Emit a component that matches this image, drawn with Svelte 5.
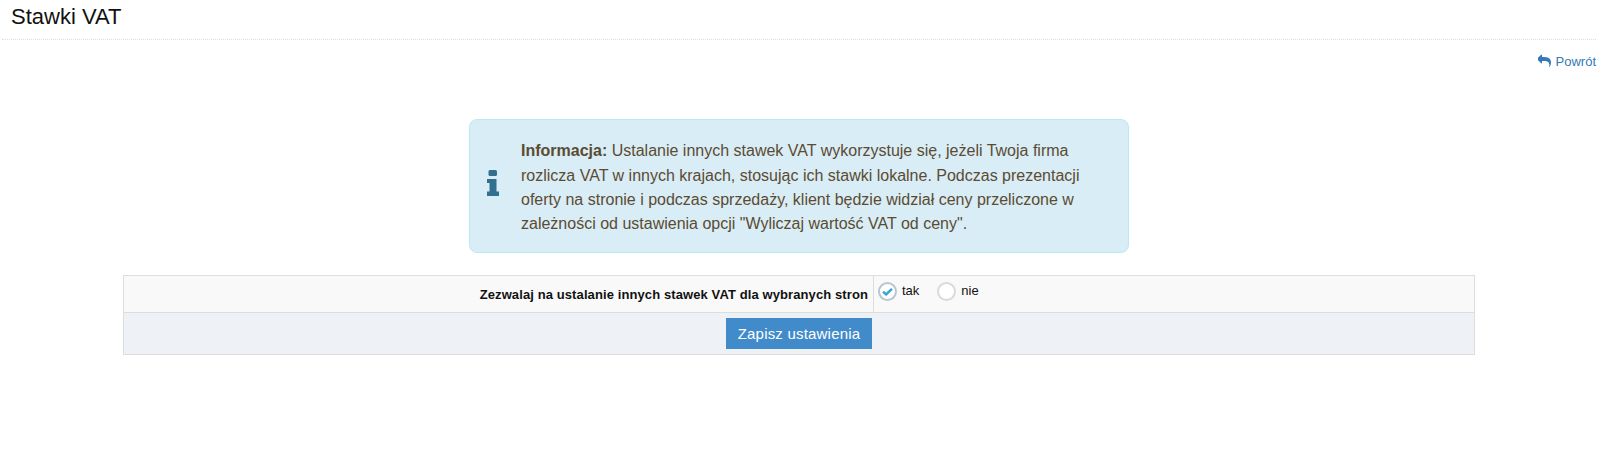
<script>
  let allow = $state('tak');
</script>

<div class="page">
  <h1 class="title">Stawki VAT</h1>

  <div class="back-row">
    <a class="back" href="#powrot">
      <svg viewBox="0 0 1792 1792" width="14" height="14" aria-hidden="true">
        <path d="M1664 1120q0 166-127 451-3 7-10.500 24t-13.500 30-13 22q-12 17-28 17-15 0-23.500-10t-8.500-25q0-9 2.500-26.500t2.500-23.500q5-68 5-123 0-101-17.500-181t-48.500-138.500-80-101-105.500-69.500-133-42.500-154-21.500-175.500-6h-224v256q0 26-19 45t-45 19-45-19l-512-512q-19-19-19-45t19-45l512-512q19-19 45-19t45 19 19 45v256h224q713 0 875 403 53 134 53 333z" />
      </svg>
      Powrót
    </a>
  </div>

  <div class="info">
    <svg class="info-icon" viewBox="0 0 12 26" width="12" height="26" aria-hidden="true">
      <rect x="1.500" y="0" width="8.500" height="6" rx="1.500" />
      <path d="M0 9h9.500v12.500H12V26H0v-4.500h2.500V13H0z" />
    </svg>
    <p>
      <strong>Informacja:</strong> Ustalanie innych stawek VAT wykorzystuje się, jeżeli Twoja firma
      rozlicza VAT w innych krajach, stosując ich stawki lokalne. Podczas prezentacji
      oferty na stronie i podczas sprzedaży, klient będzie widział ceny przeliczone w
      zależności od ustawienia opcji "Wyliczaj wartość VAT od ceny".
    </p>
  </div>

  <form class="settings" onsubmit={(e) => e.preventDefault()}>
    <div class="row">
      <div class="label">Zezwalaj na ustalanie innych stawek VAT dla wybranych stron</div>
      <div class="options">
        {#each ['tak', 'nie'] as option}
          <label class="radio">
            <input type="radio" name="allow" value={option} bind:group={allow} />
            <span class="mark" class:on={allow === option}>
              {#if allow === option}
                <svg viewBox="0 0 12 9" width="11" height="8" aria-hidden="true">
                  <path d="M1 4.200 4.500 7.200 11 1" fill="none" stroke="#3aa3d3" stroke-width="2.800" />
                </svg>
              {/if}
            </span>
            {option}
          </label>
        {/each}
      </div>
    </div>
    <div class="actions">
      <button type="submit">Zapisz ustawienia</button>
    </div>
  </form>
</div>

<style>
  :global(body) {
    margin: 0;
    background: #fff;
    font-family: "Liberation Sans", Arial, sans-serif;
  }

  .page {
    width: 1598px;
    height: 473px;
    overflow: hidden;
  }

  .title {
    margin: 0 2px;
    padding: 3px 0 0 9px;
    height: 36px;
    font-size: 22px;
    line-height: 27px;
    font-weight: 400;
    color: #111;
    border-bottom: 1px dotted #ddd;
  }

  .back-row {
    display: flex;
    justify-content: flex-end;
    margin-top: 13px;
    padding-right: 2px;
    height: 66px;
  }

  .back {
    display: flex;
    align-items: center;
    gap: 4px;
    height: 16px;
    font-size: 13px;
    color: #337ab7;
    text-decoration: none;
  }

  .back svg {
    fill: #337ab7;
  }

  .info {
    box-sizing: border-box;
    display: flex;
    align-items: center;
    width: 660px;
    height: 134px;
    margin: 0 auto;
    padding: 0 40px 0 17px;
    background: #d9edf7;
    border: 1px solid #bce8f1;
    border-radius: 8px;
    color: #5b4b31;
  }

  .info-icon {
    flex: none;
    fill: #31708f;
    margin: 0 22px 7px 0;
  }

  .info p {
    margin: 0;
    padding-top: 4px;
    font-size: 16px;
    line-height: 24.400px;
  }

  .settings {
    box-sizing: border-box;
    width: 1352px;
    margin: 22px auto 0;
    border: 1px solid #ddd;
    font-size: 13px;
  }

  .row {
    display: grid;
    grid-template-columns: 750px 1fr;
    height: 36px;
    background: #f9f9f9;
    border-bottom: 1px solid #ddd;
  }

  .label {
    display: flex;
    align-items: center;
    justify-content: flex-end;
    padding-right: 5px;
    font-weight: 700;
    color: #111;
    border-right: 1px solid #ddd;
    letter-spacing: 0.1px;
  }

  .options {
    display: flex;
    align-items: flex-start;
    gap: 18px;
    padding: 6px 0 0 4px;
  }

  .radio {
    display: flex;
    align-items: flex-start;
    gap: 5px;
    color: #111;
    line-height: 17px;
  }

  .radio input {
    position: absolute;
    opacity: 0;
    width: 0;
    height: 0;
  }

  .mark {
    box-sizing: border-box;
    display: flex;
    align-items: center;
    justify-content: center;
    width: 19px;
    height: 19px;
    border: 2px solid #dadada;
    border-radius: 50%;
    background: #fff;
  }

  .mark.on {
    border-color: #b9c6cf;
  }

  .actions {
    display: flex;
    justify-content: center;
    padding: 5px 0;
    background: #eef1f5;
  }

  button {
    box-sizing: border-box;
    width: 146px;
    height: 31px;
    padding: 0;
    border: 0;
    background: #428bca;
    color: #fff;
    font: 15px "Liberation Sans", Arial, sans-serif;
    letter-spacing: 0.2px;
    cursor: pointer;
  }
</style>
